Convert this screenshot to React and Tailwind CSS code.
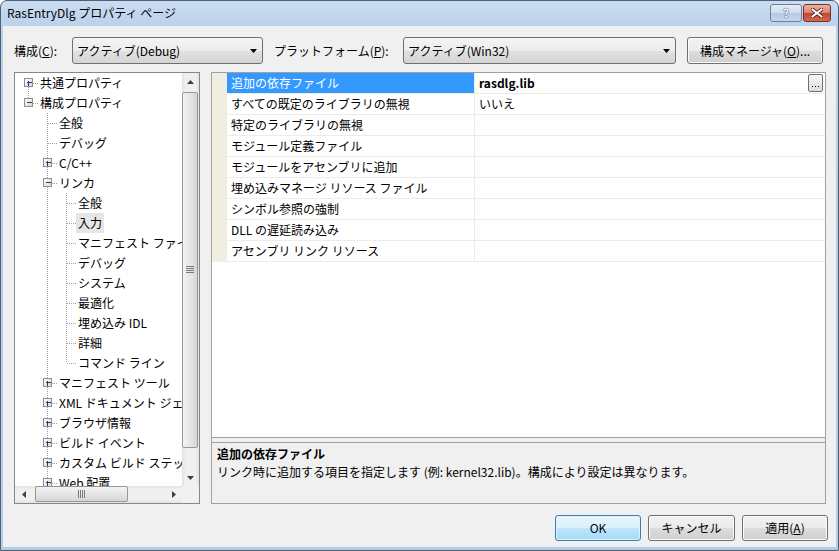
import React from "react";

const FONT = "font-['Noto_Sans_CJK_JP',sans-serif]";

const treeRows = [
  { t: "共通プロパティ", L: 0, box: "+", anc: [], next: true, first: true },
  { t: "構成プロパティ", L: 0, box: "-", anc: [], next: false },
  { t: "全般", L: 1, anc: [false], next: true },
  { t: "デバッグ", L: 1, anc: [false], next: true },
  { t: "C/C++", L: 1, box: "+", anc: [false], next: true },
  { t: "リンカ", L: 1, box: "-", anc: [false], next: true },
  { t: "全般", L: 2, anc: [false, true], next: true },
  { t: "入力", L: 2, anc: [false, true], next: true, sel: true },
  { t: "マニフェスト ファイル", L: 2, anc: [false, true], next: true },
  { t: "デバッグ", L: 2, anc: [false, true], next: true },
  { t: "システム", L: 2, anc: [false, true], next: true },
  { t: "最適化", L: 2, anc: [false, true], next: true },
  { t: "埋め込み IDL", L: 2, anc: [false, true], next: true },
  { t: "詳細", L: 2, anc: [false, true], next: true },
  { t: "コマンド ライン", L: 2, anc: [false, true], next: false },
  { t: "マニフェスト ツール", L: 1, box: "+", anc: [false], next: true },
  { t: "XML ドキュメント ジェネレーター", L: 1, box: "+", anc: [false], next: true },
  { t: "ブラウザ情報", L: 1, box: "+", anc: [false], next: true },
  { t: "ビルド イベント", L: 1, box: "+", anc: [false], next: true },
  { t: "カスタム ビルド ステップ", L: 1, box: "+", anc: [false], next: true },
  { t: "Web 配置", L: 1, box: "+", anc: [false], next: true },
];

const gridRows = [
  { n: "追加の依存ファイル", v: "rasdlg.lib", sel: true },
  { n: "すべての既定のライブラリの無視", v: "いいえ" },
  { n: "特定のライブラリの無視", v: "" },
  { n: "モジュール定義ファイル", v: "" },
  { n: "モジュールをアセンブリに追加", v: "" },
  { n: "埋め込みマネージ リソース ファイル", v: "" },
  { n: "シンボル参照の強制", v: "" },
  { n: "DLL の遅延読み込み", v: "" },
  { n: "アセンブリ リンク リソース", v: "" },
];

function TreeRow({ r }) {
  const w = 25 + 19 * r.L;
  const x0 = 13 + 19 * r.L + 0.5;
  const dot = { stroke: "#a0a0a0", strokeWidth: 1, strokeDasharray: "1 1", shapeRendering: "crispEdges" };
  const bx = 9 + 19 * r.L + 0.5;
  return (
    <div className="flex h-[20px] items-center whitespace-nowrap shrink-0">
      <svg width={w} height={20} className="shrink-0">
        <defs>
          <linearGradient id="bxg" x1="0" y1="0" x2="1" y2="1">
            <stop offset="0" stopColor="#ffffff" />
            <stop offset="1" stopColor="#d6d6d6" />
          </linearGradient>
        </defs>
        {r.anc.map((a, k) =>
          a ? <line key={k} x1={13 + 19 * k + 0.5} y1={0} x2={13 + 19 * k + 0.5} y2={20} style={dot} /> : null
        )}
        <line x1={x0} y1={r.first ? 10 : 0} x2={x0} y2={r.next ? 20 : 10} style={dot} />
        <line x1={x0} y1={10.5} x2={13 + 19 * r.L + 10} y2={10.5} style={dot} />
        {r.box && (
          <g shapeRendering="crispEdges">
            <rect x={bx} y={5.5} width={8} height={8} fill="url(#bxg)" stroke="#8e8f8f" />
            <line x1={bx + 2} y1={9.5} x2={bx + 7} y2={9.5} stroke="#1d3f75" />
            {r.box === "+" && <line x1={bx + 4} y1={7.5} x2={bx + 4} y2={12.5} stroke="#1d3f75" />}
          </g>
        )}
      </svg>
      <span
        className={`-ml-[2px] px-[2px] text-[12px] leading-[20px] text-black ${r.sel ? "bg-[#e6e6e6]" : ""}`}
      >
        {r.t}
      </span>
    </div>
  );
}

function Arrow({ dir, color = "#404040" }) {
  const paths = {
    up: "M0 4L3.5 0L7 4z",
    down: "M0 0h7L3.5 4z",
    left: "M4 0v7L0 3.5z",
    right: "M0 0v7L4 3.5z",
  };
  const vert = dir === "up" || dir === "down";
  return (
    <svg width={vert ? 7 : 4} height={vert ? 4 : 7}>
      <path d={paths[dir]} fill={color} />
    </svg>
  );
}

function Combo({ w, text }) {
  return (
    <div
      className={`${w} h-[27px] rounded-[3px] border border-[#707070] bg-[linear-gradient(to_bottom,#f4f4f4_0%,#ececec_50%,#e1e1e1_50%,#d5d5d5_100%)] flex items-center pl-[4px] pr-[5px] shrink-0`}
    >
      <span className="flex-1 text-[12px] leading-[16px] text-black">{text}</span>
      <Arrow dir="down" color="#000" />
    </div>
  );
}

function Btn({ w, children, def }) {
  return (
    <div
      className={`${w} h-[26px] rounded-[3px] border flex items-center justify-center text-[12px] leading-[16px] text-black shrink-0 ${
        def
          ? "border-[#3c7fb1] bg-[linear-gradient(to_bottom,#eaf6fd_0%,#d9f0fc_50%,#bee6fd_50%,#a7d9f5_100%)] shadow-[inset_0_0_0_1px_#dff1fb]"
          : "border-[#707070] bg-[linear-gradient(to_bottom,#f2f2f2_0%,#ebebeb_50%,#dddddd_50%,#cfcfcf_100%)] shadow-[inset_0_0_0_1px_#fbfbfb]"
      }`}
    >
      {children}
    </div>
  );
}

export default function App() {
  return (
    <div
      className={`${FONT} w-[839px] h-[551px] overflow-hidden rounded-t-[7px] border border-[#4f6077] bg-[linear-gradient(to_bottom,#cadcf0_0px,#bad1eb_26px,#b3cce9_100%)] flex flex-col`}
    >
      {/* Title bar */}
      <div className="h-[25px] flex items-start shrink-0">
        <div className="pl-[6px] pt-[3px] text-[12px] leading-[18px] text-black">RasEntryDlg プロパティ ページ</div>
        <div className="ml-auto mr-[7px] mt-[3px] flex gap-[1px]">
          <div className="w-[32px] h-[18px] rounded-[3px] border border-[#6d7f98] bg-[linear-gradient(to_bottom,#e4edf8_0%,#cddcef_50%,#b5c9e4_50%,#c4d6ec_100%)] flex items-center justify-center">
            <span className="text-[12px] leading-[12px] font-bold text-[#f5f8fc] [text-shadow:0_0_1px_#34455c,0_0_1px_#34455c]">?</span>
          </div>
          <div className="w-[28px] h-[18px] rounded-[3px] border border-[#7e2e22] bg-[linear-gradient(to_bottom,#eab2a5_0%,#d9826e_50%,#c4452c_50%,#d2694f_100%)] flex items-center justify-center">
            <svg width="12" height="10" viewBox="0 0 12 10">
              <path d="M1.5 1.5L10.5 8.5M10.5 1.5L1.5 8.5" stroke="#4a1a12" strokeWidth="3.6" strokeLinecap="square" />
              <path d="M1.5 1.5L10.5 8.5M10.5 1.5L1.5 8.5" stroke="#ffffff" strokeWidth="2" strokeLinecap="square" />
            </svg>
          </div>
        </div>
      </div>

      {/* Client area */}
      <div className="mx-[2px] w-[833px] h-[521px] bg-[#f0f0f0] flex flex-col shrink-0">
        {/* Top row */}
        <div className="mt-[11px] ml-[11px] h-[27px] flex items-center">
          <div className="w-[58px] text-[12px] leading-[16px] text-black">
            構成(<u>C</u>):
          </div>
          <Combo w="w-[191px]" text="アクティブ(Debug)" />
          <div className="ml-[11px] w-[129px] text-[12px] leading-[16px] text-black">
            プラットフォーム(<u>P</u>):
          </div>
          <Combo w="w-[273px]" text="アクティブ(Win32)" />
          <div className="ml-[11px]">
            <Btn w="w-[136px] h-[27px]">
              構成マネージャ(<u>O</u>)...
            </Btn>
          </div>
        </div>

        {/* Main */}
        <div className="mt-[8px] ml-[11px] h-[432px] flex">
          {/* Tree */}
          <div className="w-[186px] h-full border border-[#828790] bg-white flex flex-col shrink-0">
            <div className="flex h-[413px]">
              <div className="w-[167px] overflow-hidden flex flex-col">
                {treeRows.map((r, i) => (
                  <TreeRow key={i} r={r} />
                ))}
              </div>
              <div className="w-[17px] flex flex-col bg-[linear-gradient(to_right,#e2e2e2,#f0f0f0_20%,#f0f0f0_80%,#e2e2e2)]">
                <div className="h-[17px] flex items-center justify-center">
                  <Arrow dir="up" />
                </div>
                <div className="h-[2px]" />
                <div className="h-[356px] mr-[1px] rounded-[2px] border border-[#979797] bg-[linear-gradient(to_right,#f3f3f3,#e6e6e6_50%,#d6d6d6)] flex items-center justify-center">
                  <svg width="8" height="8">
                    <g stroke="#7a7a7a" shapeRendering="crispEdges">
                      <line x1="0" y1="0.5" x2="8" y2="0.5" />
                      <line x1="0" y1="2.5" x2="8" y2="2.5" />
                      <line x1="0" y1="4.5" x2="8" y2="4.5" />
                      <line x1="0" y1="6.5" x2="8" y2="6.5" />
                    </g>
                  </svg>
                </div>
                <div className="flex-1" />
                <div className="h-[17px] flex items-center justify-center">
                  <Arrow dir="down" />
                </div>
              </div>
            </div>
            <div className="flex h-[17px]">
              <div className="w-[167px] flex bg-[linear-gradient(to_bottom,#e2e2e2,#f0f0f0_20%,#f0f0f0_80%,#e2e2e2)]">
                <div className="w-[17px] flex items-center justify-center">
                  <Arrow dir="left" />
                </div>
                <div className="w-[3px]" />
                <div className="w-[93px] mb-[1px] rounded-[2px] border border-[#979797] bg-[linear-gradient(to_bottom,#f3f3f3,#e6e6e6_50%,#d6d6d6)] flex items-center justify-center">
                  <svg width="8" height="8">
                    <g stroke="#7a7a7a" shapeRendering="crispEdges">
                      <line y1="0" x1="0.5" y2="8" x2="0.5" />
                      <line y1="0" x1="2.5" y2="8" x2="2.5" />
                      <line y1="0" x1="4.5" y2="8" x2="4.5" />
                      <line y1="0" x1="6.5" y2="8" x2="6.5" />
                    </g>
                  </svg>
                </div>
                <div className="flex-1" />
                <div className="w-[17px] flex items-center justify-center">
                  <Arrow dir="right" />
                </div>
              </div>
              <div className="w-[17px] bg-[#f0f0f0]" />
            </div>
          </div>

          {/* Property panel */}
          <div className="ml-[11px] w-[615px] h-full border border-[#a0a0a0] flex flex-col shrink-0">
            <div className="h-[364px] bg-white flex flex-col">
              {gridRows.map((r, i) => (
                <div key={i} className="flex h-[21px] shrink-0">
                  <div className="w-[15px] bg-[#f0eee1]" />
                  <div className="flex-1 flex border-b border-[#efeddf]">
                    <div
                      className={`w-[248px] border-r border-[#efeddf] pl-[4px] text-[12px] leading-[20px] whitespace-nowrap ${
                        r.sel ? "bg-[#3399ff] text-white" : "text-black"
                      }`}
                    >
                      {r.n}
                    </div>
                    <div className="flex-1 flex items-center pl-[4px] pr-[2px]">
                      <span className={`flex-1 text-[12px] leading-[20px] text-black ${r.sel ? "font-bold" : ""}`}>
                        {r.v}
                      </span>
                      {r.sel && (
                        <div className="w-[15px] h-[18px] rounded-[2px] border border-[#707070] bg-[linear-gradient(to_bottom,#f6f6f6,#dedede)] flex items-end justify-center pb-[3px]">
                          <svg width="7" height="2">
                            <rect x="0" y="0" width="1" height="1" fill="#000" />
                            <rect x="3" y="0" width="1" height="1" fill="#000" />
                            <rect x="6" y="0" width="1" height="1" fill="#000" />
                          </svg>
                        </div>
                      )}
                    </div>
                  </div>
                </div>
              ))}
            </div>
            <div className="border-b border-[#a0a0a0]" />
            <div className="h-[4px] bg-[#f0f0f0]" />
            <div className="border-t border-[#a0a0a0] flex-1 bg-[#f0f0f0] pl-[5px] pt-[2px]">
              <div className="text-[12px] leading-[18px] font-bold text-black">追加の依存ファイル</div>
              <div className="text-[12px] leading-[18px] text-black">
                リンク時に追加する項目を指定します (例: kernel32.lib)。構成により設定は異なります。
              </div>
            </div>
          </div>
        </div>

        {/* Buttons */}
        <div className="mt-[11px] flex justify-end mr-[8px] gap-[7px]">
          <Btn w="w-[86px]" def>
            OK
          </Btn>
          <Btn w="w-[87px]">キャンセル</Btn>
          <Btn w="w-[86px]">
            適用(<u>A</u>)
          </Btn>
        </div>
      </div>
    </div>
  );
}
